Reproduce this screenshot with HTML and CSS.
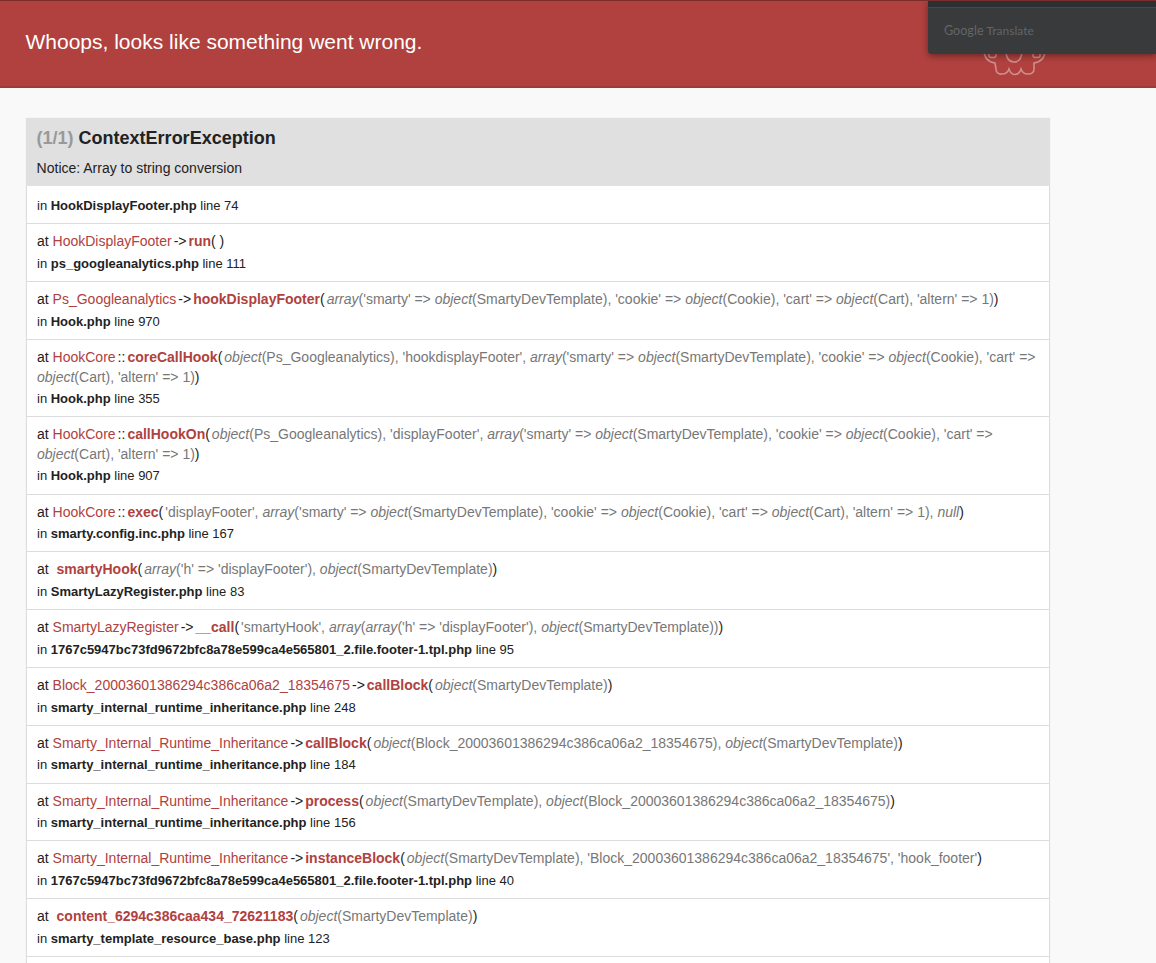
FILE: index.html
```html
<!DOCTYPE html>
<html lang="en">
<head>
<meta charset="utf-8">
<title>Whoops, looks like something went wrong.</title>
<link rel="stylesheet" href="styles.css">
</head>
<body>
<header class="summary">
  <h1 class="summary-title">Whoops, looks like something went wrong.</h1>
  <div class="ghost">
    <svg width="70" height="34" viewBox="980 44 70 34" fill="none" stroke="#fff" stroke-width="1.6">
      <path d="M984 50 C984 58 988 62 995 63 L996 69 C996 73 999 74.5 1002 74 C1005 74 1008 72 1009 69 C1010 72 1012 74.5 1015 74.5 C1018 74.5 1020 72 1021 69 C1022 72 1025 74.5 1028 74 C1032 74 1034 72 1034 69 L1034 63 C1041 62 1045 58 1045 50"/>
      <path d="M1006 50 C1006 58 1009 62 1014 62 C1019 62 1022 58 1022 50"/>
      <path d="M989 50 L989 56 C989 58 996 58 996 56 L996 50"/>
      <path d="M1033 50 L1033 56 C1033 58 1040 58 1040 56 L1040 50"/>
    </svg>
  </div>
  <div class="translate-panel">
    <div class="translate-top"></div>
    <div class="translate-foot"><span class="translate-brand"><span class="translate-google">Google</span><span class="translate-word">Translate</span></span></div>
  </div>
</header>
<main class="content">
  <table class="trace">
    <thead>
      <tr><th>
        <h2 class="exception-title"><span class="exception-count">(1/1)</span> ContextErrorException</h2>
        <p class="exception-message">Notice: Array to string conversion</p>
      </th></tr>
    </thead>
    <tbody>
      <tr><td class="first"><span class="file-line">in <b>HookDisplayFooter.php</b> line 74</span></td></tr>
      <tr><td>at <span class="cls">HookDisplayFooter</span><span class="type">-&gt;</span><span class="method">run</span>( )<span class="file-line">in <b>ps_googleanalytics.php</b> line 111</span></td></tr>
      <tr><td>at <span class="cls">Ps_Googleanalytics</span><span class="type">-&gt;</span><span class="method">hookDisplayFooter</span>(<span class="args"><em>array</em>('smarty' =&gt; <em>object</em>(SmartyDevTemplate), 'cookie' =&gt; <em>object</em>(Cookie), 'cart' =&gt; <em>object</em>(Cart), 'altern' =&gt; 1)</span>)<span class="file-line">in <b>Hook.php</b> line 970</span></td></tr>
      <tr><td>at <span class="cls">HookCore</span><span class="type">::</span><span class="method">coreCallHook</span>(<span class="args"><em>object</em>(Ps_Googleanalytics), 'hookdisplayFooter', <em>array</em>('smarty' =&gt; <em>object</em>(SmartyDevTemplate), 'cookie' =&gt; <em>object</em>(Cookie), 'cart' =&gt; <em>object</em>(Cart), 'altern' =&gt; 1)</span>)<span class="file-line">in <b>Hook.php</b> line 355</span></td></tr>
      <tr><td>at <span class="cls">HookCore</span><span class="type">::</span><span class="method">callHookOn</span>(<span class="args"><em>object</em>(Ps_Googleanalytics), 'displayFooter', <em>array</em>('smarty' =&gt; <em>object</em>(SmartyDevTemplate), 'cookie' =&gt; <em>object</em>(Cookie), 'cart' =&gt; <em>object</em>(Cart), 'altern' =&gt; 1)</span>)<span class="file-line">in <b>Hook.php</b> line 907</span></td></tr>
      <tr><td>at <span class="cls">HookCore</span><span class="type">::</span><span class="method">exec</span>(<span class="args">'displayFooter', <em>array</em>('smarty' =&gt; <em>object</em>(SmartyDevTemplate), 'cookie' =&gt; <em>object</em>(Cookie), 'cart' =&gt; <em>object</em>(Cart), 'altern' =&gt; 1), <em>null</em></span>)<span class="file-line">in <b>smarty.config.inc.php</b> line 167</span></td></tr>
      <tr><td>at <span class="type"></span><span class="method">smartyHook</span>(<span class="args"><em>array</em>('h' =&gt; 'displayFooter'), <em>object</em>(SmartyDevTemplate)</span>)<span class="file-line">in <b>SmartyLazyRegister.php</b> line 83</span></td></tr>
      <tr><td>at <span class="cls">SmartyLazyRegister</span><span class="type">-&gt;</span><span class="method">__call</span>(<span class="args">'smartyHook', <em>array</em>(<em>array</em>('h' =&gt; 'displayFooter'), <em>object</em>(SmartyDevTemplate))</span>)<span class="file-line">in <b>1767c5947bc73fd9672bfc8a78e599ca4e565801_2.file.footer-1.tpl.php</b> line 95</span></td></tr>
      <tr><td>at <span class="cls">Block_20003601386294c386ca06a2_18354675</span><span class="type">-&gt;</span><span class="method">callBlock</span>(<span class="args"><em>object</em>(SmartyDevTemplate)</span>)<span class="file-line">in <b>smarty_internal_runtime_inheritance.php</b> line 248</span></td></tr>
      <tr><td>at <span class="cls">Smarty_Internal_Runtime_Inheritance</span><span class="type">-&gt;</span><span class="method">callBlock</span>(<span class="args"><em>object</em>(Block_20003601386294c386ca06a2_18354675), <em>object</em>(SmartyDevTemplate)</span>)<span class="file-line">in <b>smarty_internal_runtime_inheritance.php</b> line 184</span></td></tr>
      <tr><td>at <span class="cls">Smarty_Internal_Runtime_Inheritance</span><span class="type">-&gt;</span><span class="method">process</span>(<span class="args"><em>object</em>(SmartyDevTemplate), <em>object</em>(Block_20003601386294c386ca06a2_18354675)</span>)<span class="file-line">in <b>smarty_internal_runtime_inheritance.php</b> line 156</span></td></tr>
      <tr><td>at <span class="cls">Smarty_Internal_Runtime_Inheritance</span><span class="type">-&gt;</span><span class="method">instanceBlock</span>(<span class="args"><em>object</em>(SmartyDevTemplate), 'Block_20003601386294c386ca06a2_18354675', 'hook_footer'</span>)<span class="file-line">in <b>1767c5947bc73fd9672bfc8a78e599ca4e565801_2.file.footer-1.tpl.php</b> line 40</span></td></tr>
      <tr><td>at <span class="type"></span><span class="method">content_6294c386caa434_72621183</span>(<span class="args"><em>object</em>(SmartyDevTemplate)</span>)<span class="file-line">in <b>smarty_template_resource_base.php</b> line 123</span></td></tr>
      <tr><td class="empty-tail"></td></tr>
    </tbody>
  </table>
</main>
</body>
</html>
```
FILE: styles.css
```css
html, body { margin: 0; padding: 0; }
body {
  background: #f9f9f9;
  color: #222;
  font: 14px/1.4 "Liberation Sans", Arial, sans-serif;
  overflow: hidden;
  height: 963px;
}
.summary {
  position: relative;
  height: 85px;
  background: #b0413e;
  border-top: 1px solid rgba(0,0,0,.3);
  border-bottom: 2px solid rgba(0,0,0,.1);
  margin-bottom: 30px;
  overflow: hidden;
  display: flex;
  align-items: center;
}
.summary-title {
  margin: 0 0 4px 25.5px;
  color: #fff;
  font-size: 21px;
  font-weight: 400;
  line-height: 1.4;
}
.ghost { position: absolute; left: 980px; top: 43px; opacity: .4; line-height: 0; }
.translate-panel {
  position: absolute;
  left: 928px;
  top: -1px;
  width: 228px;
  height: 54px;
  background: #383a3c;
  border-bottom-left-radius: 4px;
  box-shadow: 0 2px 6px rgba(0,0,0,.4);
}
.translate-top { height: 7px; background: #2e2f32; border-bottom: 1px solid #45474a; }
.translate-foot { padding: 14.5px 0 0 16px; }
.translate-brand { color: #636568; font: 12px/16px Lato, sans-serif; display: flex; align-items: baseline; gap: 3px; }
.translate-google { font-size: 12.6px; }
.content { width: 1024px; margin-left: 26px; }
.trace {
  width: 100%;
  border-collapse: collapse;
  background: #fff;
  box-shadow: 0 0 1px rgba(128,128,128,.2);
}
.trace th { background: #e0e0e0; border: 1px solid #e0e0e0; padding: 7.4px 10px 7px 9.6px; text-align: left; font-weight: 400; }
.exception-title { margin: 0 0 7px; font-size: 18px; font-weight: 700; line-height: 1.4; }
.exception-count { color: #999; }
.exception-message { margin: 0; font-size: 14px; }
.trace td {
  border: 1px solid #ddd;
  padding: 8px 10px;
  font-size: 14px;
}
.cls { color: #b0413e; }
.type { padding: 0 2px; }
.method { color: #b0413e; font-weight: 700; }
.args { color: #777; padding-left: 2px; }
.file-line { display: block; font-size: 13px; line-height: 1.4; margin-top: 3px; }
.empty-tail { height: 40px; }
```
